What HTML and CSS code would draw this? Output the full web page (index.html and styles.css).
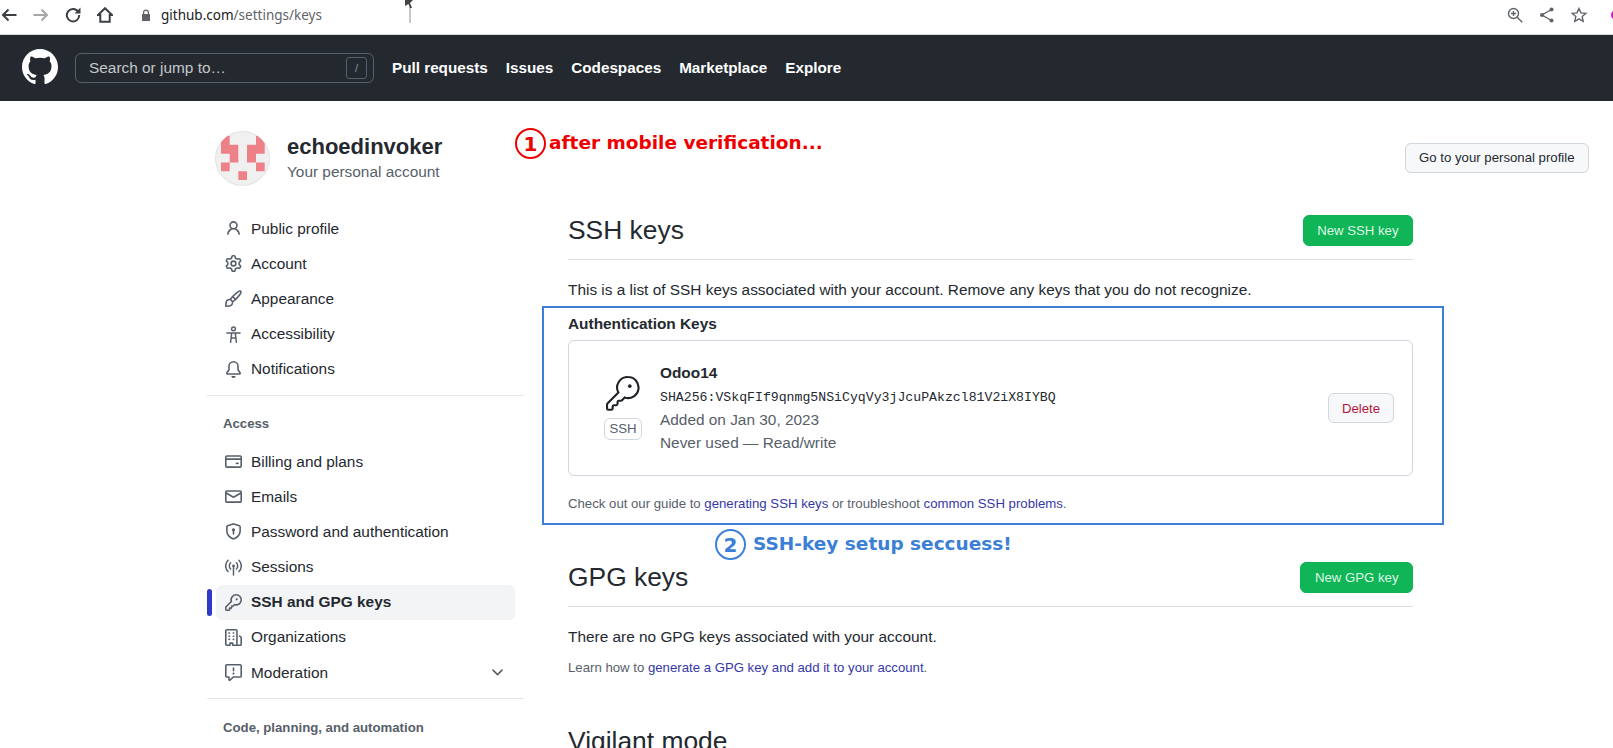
FILE: index.html
```html
<!DOCTYPE html>
<html lang="en">
<head>
  <meta charset="UTF-8">
  <title>SSH and GPG keys</title>
  <link rel="stylesheet" href="styles.css">
</head>
<body>
  <!-- browser toolbar -->
  <div class="toolbar">
    <div class="tool-group">
      <svg class="tool-icon" viewBox="0 0 16 16"><path d="M15.500 8H2M7.500 2.500 2 8l5.500 5.500"/></svg>
      <svg class="tool-icon muted" viewBox="0 0 16 16"><path d="M.5 8H14M8.500 2.500 14 8l-5.500 5.500"/></svg>
      <svg class="tool-icon" viewBox="0 0 16 16"><path d="M13.300 5A6.200 6.200 0 1 0 14.200 8"/><path class="solid" d="M9.500 6.500h6v-6z"/></svg>
      <svg class="tool-icon" viewBox="0 0 16 16"><path d="M8 1.200 1 8h2.300v6.800h9.400V8H15z"/></svg>
    </div>
    <div class="address">
      <svg class="lock" viewBox="0 0 10 12"><path d="M2 5V3.500a3 3 0 0 1 6 0V5h1v7H1V5zm1.200 0h3.600V3.500a1.800 1.800 0 0 0-3.600 0z"/></svg>
      <span class="host">github.com</span><span class="url-path">/settings/keys</span>
    </div>
    <div class="tool-group right">
      <svg class="tool-icon thin" viewBox="0 0 16 16"><circle cx="6.500" cy="6.500" r="5"/><path d="m10.200 10.200 5 5M4 6.500h5M6.500 4v5"/></svg>
      <svg class="tool-icon thin" viewBox="0 0 16 16"><path d="M12.500 2.500 3 8l9.500 5.500"/><circle class="solid" cx="12.500" cy="2.500" r="2"/><circle class="solid" cx="3" cy="8" r="2"/><circle class="solid" cx="12.500" cy="13.500" r="2"/></svg>
      <svg class="tool-icon thin" viewBox="0 0 16 16"><path d="m8 1.500 2 4.400 4.800.5-3.600 3.200 1 4.700L8 11.900l-4.200 2.400 1-4.700L1.200 6.400 6 5.900z"/></svg>
    </div>
  </div>

  <header class="gh-header">
    <svg class="gh-logo" viewBox="0 0 16 16"><path d="M8 0c4.420 0 8 3.580 8 8a8.013 8.013 0 0 1-5.450 7.590c-.4.080-.55-.17-.55-.38 0-.27.010-1.130.010-2.200 0-.75-.25-1.230-.54-1.480 1.780-.2 3.650-.88 3.650-3.950 0-.88-.31-1.590-.82-2.150.080-.2.360-1.020-.080-2.120 0 0-.67-.22-2.200.82-.64-.18-1.320-.27-2-.27-.68 0-1.360.090-2 .27-1.530-1.030-2.200-.82-2.200-.82-.44 1.100-.16 1.920-.080 2.120-.51.560-.82 1.280-.82 2.150 0 3.060 1.860 3.750 3.640 3.950-.23.2-.44.550-.51 1.070-.46.210-1.610.550-2.330-.66-.15-.24-.6-.83-1.230-.82-.67.010-.27.380.010.530.34.190.730.9.820 1.130.16.450.680 1.310 2.690.940 0 .67.010 1.300.010 1.490 0 .210-.15.450-.55.380A7.995 7.995 0 0 1 0 8c0-4.420 3.580-8 8-8Z"/></svg>
    <div class="search">
      <span class="search-text">Search or jump to…</span>
      <kbd class="slash">/</kbd>
    </div>
    <nav class="gh-nav">
      <a>Pull requests</a>
      <a>Issues</a>
      <a>Codespaces</a>
      <a>Marketplace</a>
      <a>Explore</a>
    </nav>
  </header>

  <div class="account-head">
    <div class="account">
      <svg class="avatar" viewBox="0 0 55 55">
        <clipPath id="avatar-clip"><circle cx="27.500" cy="27.500" r="27"/></clipPath>
        <circle cx="27.500" cy="27.500" r="27" fill="#f0f0f0" stroke="#e2e2e2"/>
        <path clip-path="url(#avatar-clip)" fill="#ee8087" d="M6 5h8.700v8.800H6zM41 5h8.700v8.800H41zM6 13.800h17.300v8.900H6zM32 13.800h17.700v8.900H32zM14.700 22.700h8.600v8.800h-8.600zM32 22.700h9v8.800h-9zM6 31.500h8.700v8.800H6zM41 31.500h8.700v8.800H41zM23.300 40.300H32V49h-8.700z"/>
      </svg>
      <div class="account-text">
        <div class="account-name">echoedinvoker</div>
        <div class="account-sub">Your personal account</div>
      </div>
    </div>
    <a class="btn profile-btn">Go to your personal profile</a>
  </div>

  <div class="layout">
    <aside class="side">
      <a class="side-item"><svg class="icon" viewBox="0 0 16 16"><path d="M10.561 8.073a6.005 6.005 0 0 1 3.432 5.142.75.75 0 1 1-1.498.070 4.500 4.500 0 0 0-8.990 0 .75.75 0 1 1-1.498-.070 6.004 6.004 0 0 1 3.431-5.142 3.999 3.999 0 1 1 5.123 0ZM10.500 5a2.500 2.500 0 1 0-5 0 2.500 2.500 0 0 0 5 0Z"/></svg>Public profile</a>
      <a class="side-item"><svg class="icon" viewBox="0 0 16 16"><path d="M8 0a8.200 8.200 0 0 1 .701.031C9.444.095 9.990.645 10.160 1.290l.288 1.107c.018.066.079.158.212.224.231.114.454.243.668.386.123.082.233.090.299.071l1.103-.303c.644-.176 1.392.021 1.820.630.270.385.506.792.704 1.218.315.675.111 1.422-.364 1.891l-.814.806c-.049.048-.098.147-.088.294.016.257.016.515 0 .772-.01.147.038.246.088.294l.814.806c.475.469.679 1.216.364 1.891a7.977 7.977 0 0 1-.704 1.217c-.428.610-1.176.807-1.820.630l-1.102-.302c-.067-.019-.177-.011-.3.071a5.909 5.909 0 0 1-.668.386c-.133.066-.194.158-.211.224l-.29 1.106c-.168.646-.715 1.196-1.458 1.260a8.006 8.006 0 0 1-1.402 0c-.743-.064-1.289-.614-1.458-1.260l-.289-1.106c-.018-.066-.079-.158-.212-.224a5.738 5.738 0 0 1-.668-.386c-.123-.082-.233-.090-.299-.071l-1.103.303c-.644.176-1.392-.021-1.820-.630a8.120 8.120 0 0 1-.704-1.218c-.315-.675-.111-1.422.363-1.891l.815-.806c.050-.048.098-.147.088-.294a6.214 6.214 0 0 1 0-.772c.010-.147-.038-.246-.088-.294l-.815-.806C.635 6.045.431 5.298.746 4.623a7.920 7.920 0 0 1 .704-1.217c.428-.610 1.176-.807 1.820-.630l1.102.302c.067.019.177.011.3-.071.214-.143.437-.272.668-.386.133-.066.194-.158.211-.224l.29-1.106C6.009.645 6.556.095 7.299.030 7.530.010 7.764 0 8 0Zm-.571 1.525c-.036.003-.108.036-.137.146l-.289 1.105c-.147.561-.549.967-.998 1.189-.173.086-.34.183-.5.290-.417.278-.97.423-1.529.270l-1.103-.303c-.109-.030-.175.016-.195.045-.22.312-.412.644-.573.990-.014.031-.021.110.059.190l.815.806c.411.406.562.957.530 1.456a4.709 4.709 0 0 0 0 .582c.032.499-.119 1.050-.53 1.456l-.815.806c-.081.080-.073.159-.059.190.162.346.353.677.573.989.020.030.085.076.195.046l1.102-.303c.560-.153 1.113-.008 1.530.270.161.107.328.204.501.290.447.222.850.629.997 1.189l.289 1.105c.029.109.101.143.137.146a6.600 6.600 0 0 0 1.142 0c.036-.003.108-.036.137-.146l.289-1.105c.147-.561.549-.967.998-1.189.173-.086.34-.183.5-.29.417-.278.97-.423 1.529-.27l1.103.303c.109.029.175-.016.195-.045.22-.313.411-.644.573-.99.014-.031.021-.110-.059-.19l-.815-.806c-.411-.406-.562-.957-.53-1.456a4.709 4.709 0 0 0 0-.582c-.032-.499.119-1.050.53-1.456l.815-.806c.081-.080.073-.159.059-.19a6.464 6.464 0 0 0-.573-.989c-.020-.030-.085-.076-.195-.046l-1.102.303c-.56.153-1.113.008-1.530-.27a4.440 4.440 0 0 0-.501-.29c-.447-.222-.85-.629-.997-1.189l-.289-1.105c-.029-.11-.101-.143-.137-.146a6.600 6.600 0 0 0-1.142 0ZM11 8a3 3 0 1 1-6 0 3 3 0 0 1 6 0ZM9.500 8a1.500 1.500 0 1 0-3.001.001A1.500 1.500 0 0 0 9.500 8Z"/></svg>Account</a>
      <a class="side-item"><svg class="icon" viewBox="0 0 16 16"><path d="M11.134 1.535c.7-.509 1.416-.942 2.076-1.155.649-.21 1.463-.267 2.069.34.603.601.568 1.411.368 2.070-.202.668-.624 1.390-1.125 2.096-1.011 1.424-2.496 2.987-3.775 4.249-1.098 1.084-2.132 1.839-3.040 2.300a3.744 3.744 0 0 1-1.055 3.217c-.431.431-1.065.691-1.657.861-.614.177-1.294.287-1.914.357A21.151 21.151 0 0 1 .797 16H.743l.007-.75H.749L.742 16a.75.75 0 0 1-.743-.742l.743-.008-.742.007v-.054a21.250 21.250 0 0 1 .130-2.284c.067-.647.187-1.287.358-1.914.170-.591.430-1.226.860-1.657a3.746 3.746 0 0 1 3.227-1.054c.466-.893 1.225-1.907 2.314-2.982 1.271-1.255 2.833-2.750 4.245-3.777ZM1.620 13.089c-.051.464-.086.929-.104 1.395.466-.018.932-.053 1.396-.104a10.511 10.511 0 0 0 1.668-.309c.526-.151.856-.325 1.011-.48a2.250 2.250 0 1 0-3.182-3.182c-.155.155-.329.485-.48 1.010a10.515 10.515 0 0 0-.309 1.670Zm10.396-10.340c-1.224.89-2.605 2.189-3.822 3.384l1.718 1.718c1.210-1.205 2.510-2.597 3.387-3.833.47-.662.78-1.227.912-1.662.134-.444.032-.551.009-.575h-.001V1.780c-.014-.014-.113-.113-.548.027-.432.14-.995.462-1.655.942Zm-4.832 7.266-.001.001a9.859 9.859 0 0 0 1.630-1.142L7.155 7.216a9.700 9.700 0 0 0-1.161 1.607c.482.302.889.71 1.190 1.192Z"/></svg>Appearance</a>
      <a class="side-item"><svg class="icon line" viewBox="0 0 16 16"><circle cx="8" cy="2.700" r="1.800"/><path d="M1.800 6.500h12.400M6.300 6.500 5.300 15.300M9.700 6.500l1 8.800M5.800 11.300h4.400"/></svg>Accessibility</a>
      <a class="side-item"><svg class="icon" viewBox="0 0 16 16"><path d="M8 16a2 2 0 0 0 1.985-1.750c.017-.137-.097-.25-.235-.25h-3.500c-.138 0-.252.113-.235.25A2 2 0 0 0 8 16ZM3 5a5 5 0 0 1 10 0v2.947c0 .05.015.098.042.139l1.703 2.555A1.519 1.519 0 0 1 13.482 13H2.518a1.516 1.516 0 0 1-1.263-2.360l1.703-2.554A.255.255 0 0 0 3 7.947Zm5-3.500A3.500 3.500 0 0 0 4.500 5v2.947c0 .346-.102.683-.294.97l-1.703 2.556a.017.017 0 0 0-.003.01l.001.006c0 .002.002.004.004.006l.006.004.007.001h10.964l.007-.001.006-.004.004-.006.001-.007a.017.017 0 0 0-.003-.01l-1.703-2.554a1.745 1.745 0 0 1-.294-.97V5A3.500 3.500 0 0 0 8 1.500Z"/></svg>Notifications</a>

      <div class="side-rule"></div>
      <h2 class="side-title">Access</h2>

      <a class="side-item"><svg class="icon" viewBox="0 0 16 16"><path d="M10.750 9a.75.75 0 0 0 0 1.500h1.500a.75.75 0 0 0 0-1.500h-1.500Z"/><path d="M0 3.750C0 2.784.784 2 1.750 2h12.500c.966 0 1.750.784 1.750 1.750v8.500A1.750 1.750 0 0 1 14.250 14H1.750A1.750 1.750 0 0 1 0 12.250ZM14.500 6.500h-13v5.750c0 .138.112.25.25.25h12.500a.25.25 0 0 0 .25-.25Zm0-2.750a.25.25 0 0 0-.25-.25H1.750a.25.25 0 0 0-.25.25V5h13Z"/></svg>Billing and plans</a>
      <a class="side-item"><svg class="icon" viewBox="0 0 16 16"><path d="M1.750 2h12.500c.966 0 1.750.784 1.750 1.750v8.500A1.750 1.750 0 0 1 14.250 14H1.750A1.750 1.750 0 0 1 0 12.250v-8.500C0 2.784.784 2 1.750 2ZM1.500 12.251c0 .138.112.25.25.25h12.500a.25.25 0 0 0 .25-.25V5.809L8.380 9.397a.75.75 0 0 1-.76 0L1.500 5.809v6.442Zm13-8.181v-.32a.25.25 0 0 0-.25-.25H1.750a.25.25 0 0 0-.25.25v.32L8 7.880Z"/></svg>Emails</a>
      <a class="side-item"><svg class="icon" viewBox="0 0 16 16"><path d="M7.467.133a1.748 1.748 0 0 1 1.066 0l5.250 1.680A1.750 1.750 0 0 1 15 3.480V7c0 1.566-.32 3.182-1.303 4.682-.983 1.498-2.585 2.813-5.032 3.855a1.697 1.697 0 0 1-1.330 0c-2.447-1.042-4.049-2.357-5.032-3.855C1.320 10.182 1 8.566 1 7V3.480a1.750 1.750 0 0 1 1.217-1.667Zm.61 1.429a.25.25 0 0 0-.153 0l-5.250 1.680a.25.25 0 0 0-.174.238V7c0 1.358.275 2.666 1.057 3.860.784 1.194 2.121 2.340 4.366 3.297a.196.196 0 0 0 .154 0c2.245-.956 3.582-2.104 4.366-3.298C13.225 9.666 13.500 8.360 13.500 7V3.480a.251.251 0 0 0-.174-.237l-5.250-1.680ZM9.500 6.500a1.500 1.500 0 0 1-.75 1.300v2.450a.75.75 0 0 1-1.500 0V7.800A1.500 1.500 0 1 1 9.500 6.500Z"/></svg>Password and authentication</a>
      <a class="side-item"><svg class="icon line" viewBox="0 0 16 16"><circle class="dot" cx="8" cy="6.500" r="1.300"/><path d="M8 7v8M5.300 9.400a4 4 0 0 1 0-5.800M10.700 3.600a4 4 0 0 1 0 5.800M2.900 11.800a7.400 7.400 0 0 1 0-10.600M13.100 1.200a7.400 7.400 0 0 1 0 10.600"/></svg>Sessions</a>
      <a class="side-item active"><svg class="icon" viewBox="0 0 16 16"><path d="M10.500 0a5.499 5.499 0 1 1-1.288 10.848l-.932.932a.749.749 0 0 1-.53.220H7v.75a.749.749 0 0 1-.22.530l-.5.5a.749.749 0 0 1-.53.220H5v.75a.749.749 0 0 1-.22.530l-.5.5a.749.749 0 0 1-.53.220h-2A1.750 1.750 0 0 1 0 14.250v-2c0-.199.079-.389.220-.53l4.932-4.932A5.500 5.500 0 0 1 10.500 0Zm-4 5.500c-.001.431.069.86.205 1.269a.75.75 0 0 1-.181.768L1.500 12.560v1.690c0 .138.112.25.25.25h1.690l.060-.06v-1.190a.75.75 0 0 1 .75-.75h1.190l.060-.06v-1.190a.75.75 0 0 1 .75-.75h1.190l1.023-1.025a.75.75 0 0 1 .768-.18A4 4 0 1 0 6.500 5.500ZM11 6a1 1 0 1 1 0-2 1 1 0 0 1 0 2Z"/></svg>SSH and GPG keys</a>
      <a class="side-item"><svg class="icon" viewBox="0 0 16 16"><path d="M1.750 16A1.750 1.750 0 0 1 0 14.250V1.750C0 .784.784 0 1.750 0h8.500C11.216 0 12 .784 12 1.750v12.500c0 .085-.006.168-.018.25h2.268a.25.25 0 0 0 .25-.25V8.285a.25.25 0 0 0-.111-.208l-1.055-.703a.749.749 0 1 1 .832-1.248l1.055.703c.487.325.779.871.779 1.456v5.965A1.750 1.750 0 0 1 14.250 16h-3.500a.766.766 0 0 1-.197-.026c-.099.017-.2.026-.303.026h-3a.75.75 0 0 1-.75-.75V14h-1v1.250a.75.75 0 0 1-.75.75Zm-.25-1.750c0 .138.112.25.25.25H4v-1.250a.75.75 0 0 1 .75-.75h2.500a.75.75 0 0 1 .75.75v1.250h2.250a.25.25 0 0 0 .25-.25V1.750a.25.25 0 0 0-.25-.25h-8.500a.25.25 0 0 0-.25.25ZM3.750 6h.5a.75.75 0 0 1 0 1.500h-.5a.75.75 0 0 1 0-1.500ZM3 3.750A.75.75 0 0 1 3.750 3h.5a.75.75 0 0 1 0 1.500h-.5A.75.75 0 0 1 3 3.750Zm4 3A.75.75 0 0 1 7.750 6h.5a.75.75 0 0 1 0 1.500h-.5A.75.75 0 0 1 7 6.750ZM7.750 3h.5a.75.75 0 0 1 0 1.500h-.5a.75.75 0 0 1 0-1.500ZM3 9.750A.75.75 0 0 1 3.750 9h.5a.75.75 0 0 1 0 1.500h-.5A.75.75 0 0 1 3 9.750ZM7.750 9h.5a.75.75 0 0 1 0 1.500h-.5a.75.75 0 0 1 0-1.500Z"/></svg>Organizations</a>
      <a class="side-item"><svg class="icon" viewBox="0 0 16 16"><path d="M0 1.750C0 .784.784 0 1.750 0h12.500C15.216 0 16 .784 16 1.750v9.500A1.750 1.750 0 0 1 14.250 13H8.060l-2.573 2.573A1.458 1.458 0 0 1 3 14.543V13H1.750A1.750 1.750 0 0 1 0 11.250Zm1.750-.25a.25.25 0 0 0-.25.25v9.500c0 .138.112.25.25.25h2a.75.75 0 0 1 .75.75v2.190l2.720-2.720a.749.749 0 0 1 .53-.22h6.500a.25.25 0 0 0 .25-.25v-9.500a.25.25 0 0 0-.25-.25Zm7 2.250v2.500a.75.75 0 0 1-1.500 0v-2.500a.75.75 0 0 1 1.500 0ZM9 9a1 1 0 1 1-2 0 1 1 0 0 1 2 0Z"/></svg>Moderation<svg class="icon chevron" viewBox="0 0 16 16"><path d="M12.780 5.220a.749.749 0 0 1 0 1.060l-4.250 4.250a.749.749 0 0 1-1.060 0L3.220 6.280a.749.749 0 1 1 1.060-1.060L8 8.939l3.720-3.719a.749.749 0 0 1 1.060 0Z"/></svg></a>

      <div class="side-rule"></div>
      <h2 class="side-title">Code, planning, and automation</h2>
    </aside>

    <main class="main">
      <div class="section-head">
        <h1>SSH keys</h1>
        <a class="btn green">New SSH key</a>
      </div>
      <p class="lead">This is a list of SSH keys associated with your account. Remove any keys that you do not recognize.</p>
      <h3 class="sub-title">Authentication Keys</h3>
      <div class="key-card">
        <div class="key-badge">
          <svg class="key-big" viewBox="0 0 25 25"><path class="key-line" d="M15.750.75a7.500 7.500 0 1 1-2.350 14.620l-1.980 1.980a1 1 0 0 1-.7.3H9.250a1 1 0 0 0-1 1v1.250a1 1 0 0 1-1 1h-1.500a1 1 0 0 0-1 1v1.250a1 1 0 0 1-1 1H1.750a1 1 0 0 1-1-1v-2.840a1 1 0 0 1 .3-.7l7.800-7.800A7.500 7.500 0 0 1 15.750.75Z"/><circle cx="17" cy="7.250" r="1.300"/></svg>
          <span class="ssh-label">SSH</span>
        </div>
        <div class="key-info">
          <strong>Odoo14</strong>
          <code>SHA256:VSkqFIf9qnmg5NSiCyqVy3jJcuPAkzcl81V2iX8IYBQ</code>
          <span>Added on Jan 30, 2023</span>
          <span>Never used — Read/write</span>
        </div>
        <a class="btn danger">Delete</a>
      </div>
      <p class="hint">Check out our guide to <a>generating SSH keys</a> or troubleshoot <a>common SSH problems</a>.</p>

      <div class="section-head gpg">
        <h1>GPG keys</h1>
        <a class="btn green">New GPG key</a>
      </div>
      <p class="lead">There are no GPG keys associated with your account.</p>
      <p class="hint learn">Learn how to <a>generate a GPG key and add it to your account</a>.</p>

      <h1 class="vigilant">Vigilant mode</h1>
    </main>
  </div>

  <!-- annotations drawn over the screenshot -->
  <div class="mark-box"></div>
  <div class="note note-red"><span class="num">1</span><span class="note-text">after mobile verification...</span></div>
  <div class="note note-blue"><span class="num">2</span><span class="note-text">SSH-key setup seccuess!</span></div>
  <div class="cursor">
    <svg viewBox="0 0 10 8"><path d="M1 0h8L6 3l2 5H6L4.500 4 1 6z"/></svg>
  </div>
  <span class="ext-dot"></span>
</body>
</html>
```

FILE: styles.css
```css
* {
  margin: 0;
  padding: 0;
  box-sizing: border-box;
}
html, body {
  height: 748px;
  overflow: hidden;
  background: #fff;
  color: #24292f;
  font-family: "Liberation Sans", Arial, sans-serif;
  font-size: 15.400px;
}
body {
  position: relative;
}
a {
  color: inherit;
  text-decoration: none;
}

/* browser toolbar */
.toolbar {
  display: flex;
  align-items: center;
  height: 35px;
  padding: 0 0 4px 1px;
  border-bottom: 1px solid #d8dadc;
}
.tool-group {
  display: flex;
  align-items: center;
  gap: 16px;
  width: 130px;
}
.tool-group.right {
  width: auto;
  margin-left: auto;
  margin-right: 26px;
}
.tool-icon {
  width: 16px;
  height: 16px;
  flex: none;
  fill: none;
  stroke: #3c4043;
  stroke-width: 2;
}
.tool-icon.muted {
  stroke: #a5a7a9;
}
.tool-icon.thin {
  stroke-width: 1.4;
  stroke: #5f6368;
}
.tool-icon .solid {
  fill: #3c4043;
  stroke: none;
}
.tool-icon.thin .solid {
  fill: #5f6368;
}
.address {
  display: flex;
  align-items: center;
  font-family: "Noto Sans", sans-serif;
  font-size: 13.500px;
  padding-left: 10px;
}
.lock {
  width: 10px;
  height: 12px;
  margin-right: 10px;
  fill: #5f6368;
}
.host {
  color: #202124;
}
.url-path {
  color: #5f6368;
}

/* github header */
.gh-header {
  display: flex;
  align-items: center;
  height: 66px;
  padding-left: 22px;
  background: #24292f;
}
.gh-logo {
  width: 36px;
  height: 36px;
  margin-bottom: 2px;
  fill: #fff;
  flex: none;
}
.search {
  display: flex;
  align-items: center;
  justify-content: space-between;
  width: 299px;
  height: 30px;
  margin-left: 17px;
  padding: 0 6px 0 13px;
  border: 1px solid #57606a;
  border-radius: 6px;
  color: #c4c7ca;
}
.search-text {
  padding-bottom: 1px;
}
.slash {
  width: 21px;
  height: 22px;
  border: 1px solid #57606a;
  border-radius: 3px;
  color: #8b949e;
  font-family: "Liberation Sans", Arial, sans-serif;
  font-size: 11px;
  line-height: 20px;
  text-align: center;
}
.gh-nav {
  display: flex;
  gap: 18px;
  margin-left: 18px;
  padding-bottom: 1px;
  color: #fff;
  font-size: 15.250px;
  font-weight: bold;
}

/* account row */
.account-head {
  display: flex;
  align-items: center;
  justify-content: space-between;
  margin-top: 30px;
  padding: 0 24px 0 215px;
}
.account {
  display: flex;
  align-items: center;
  gap: 17px;
}
.avatar {
  width: 55px;
  height: 55px;
  display: block;
}
.account-text {
  padding-bottom: 2px;
}
.account-name {
  font-size: 22px;
  font-weight: bold;
  line-height: 28px;
}
.account-sub {
  color: #57606a;
  line-height: 22px;
}
.btn {
  display: inline-flex;
  align-items: center;
  height: 30px;
  padding: 0 13.500px;
  border: 1px solid #d0d7de;
  border-radius: 6px;
  background: #f6f8fa;
  font-size: 13.200px;
}
.profile-btn {
  margin-bottom: 2px;
}
.btn.green {
  height: 31px;
  border-color: #0fb254;
  background: #0fb557;
  color: #dff7e6;
}
.btn.danger {
  padding: 0 13px;
  color: #b3143c;
}

/* two columns */
.layout {
  display: grid;
  grid-template-columns: 317px 845px;
  column-gap: 44px;
  margin-top: 25px;
  padding-left: 207px;
}
.side-item {
  display: flex;
  align-items: center;
  height: 35.200px;
  margin-left: 9px;
  width: 299px;
  padding-left: 9px;
  border-radius: 6px;
  color: #24292f;
}
.icon {
  width: 17px;
  height: 17px;
  margin-right: 9px;
  flex: none;
  fill: #57606a;
}
.icon.line {
  fill: none;
  stroke: #57606a;
  stroke-width: 1.4;
  stroke-linecap: round;
}
.icon .dot {
  fill: #57606a;
  stroke: none;
}
.chevron {
  margin-left: auto;
  margin-right: 9px;
}
.side-item.active {
  position: relative;
  background: #f3f4f6;
  font-weight: bold;
}
.side-item.active::before {
  content: "";
  position: absolute;
  left: -9px;
  top: 4px;
  bottom: 4px;
  width: 5px;
  border-radius: 3px;
  background: #2d3bc6;
}
.side-rule {
  height: 1px;
  margin-top: 8px;
  background: #e4e6e9;
}
.side-title {
  margin: 20.500px 0 11.500px 16px;
  color: #57606a;
  font-size: 13.200px;
  line-height: 16px;
}

/* right column */
.main {
  padding-top: 4px;
}
.section-head {
  display: flex;
  align-items: center;
  justify-content: space-between;
  height: 45px;
  padding-bottom: 13px;
  border-bottom: 1px solid #d8dee4;
}
.section-head h1,
.vigilant {
  font-size: 26.400px;
  font-weight: normal;
  line-height: 32px;
}
.section-head h1 {
  padding-bottom: 2px;
}
.lead {
  margin-top: 20px;
  line-height: 20px;
}
.sub-title {
  margin-top: 14px;
  font-size: 15.400px;
  line-height: 20px;
}
.key-card {
  display: flex;
  align-items: center;
  height: 136px;
  margin-top: 6px;
  padding: 0 18px 0 35px;
  border: 1px solid #d0d7de;
  border-radius: 6px;
}
.key-badge {
  display: flex;
  flex-direction: column;
  align-items: center;
  gap: 7px;
  width: 38px;
}
.key-big {
  width: 35px;
  height: 35px;
  fill: #1f2328;
}
.key-line {
  fill: none;
  stroke: #1f2328;
  stroke-width: 1.500;
}
.ssh-label {
  width: 38px;
  height: 22px;
  border: 1px solid #d0d7de;
  border-radius: 6px;
  color: #57606a;
  font-size: 13.200px;
  line-height: 20px;
  text-align: center;
}
.key-info {
  display: flex;
  flex-direction: column;
  flex: 1;
  margin-left: 18px;
  color: #57606a;
  line-height: 23px;
}
.key-info strong {
  margin: -2px 0 2px;
  color: #24292f;
}
.key-info code {
  margin-bottom: -1px;
  color: #24292f;
  font-family: "Liberation Mono", monospace;
  font-size: 13.200px;
}
.hint {
  margin-top: 20px;
  color: #57606a;
  font-size: 13.200px;
  line-height: 16px;
}
.hint a {
  color: #3538a8;
}
.section-head.gpg {
  margin-top: 50px;
}
.hint.learn {
  margin-top: 13px;
}
.vigilant {
  margin-top: 49px;
}

/* annotations */
.mark-box {
  position: absolute;
  left: 542px;
  top: 306px;
  width: 902px;
  height: 219px;
  border: 2px solid #3b7fd6;
}
.note {
  position: absolute;
  display: flex;
  align-items: center;
  font-family: "DejaVu Sans", sans-serif;
  font-size: 18.500px;
  font-weight: bold;
  white-space: nowrap;
}
.note-text {
  padding-bottom: 2px;
}
.num {
  display: flex;
  align-items: center;
  justify-content: center;
  width: 31px;
  height: 31px;
  border: 2.500px solid currentColor;
  border-radius: 50%;
  font-size: 20px;
}
.note-red {
  left: 515px;
  top: 128px;
  gap: 3px;
  color: #ee0000;
}
.note-blue {
  left: 715px;
  top: 529px;
  gap: 7px;
  color: #3b7fd6;
}
.cursor {
  position: absolute;
  left: 404px;
  top: 0;
  width: 10px;
  height: 23px;
  background: linear-gradient(#c9c9c9, #c9c9c9) 5px 5px / 2px 18px no-repeat;
}
.cursor svg {
  display: block;
  width: 10px;
  height: 8px;
  fill: #444;
}
.ext-dot {
  position: absolute;
  left: 1611px;
  top: 10px;
  width: 10px;
  height: 10px;
  border-radius: 50%;
  background: #d316c9;
}
```
